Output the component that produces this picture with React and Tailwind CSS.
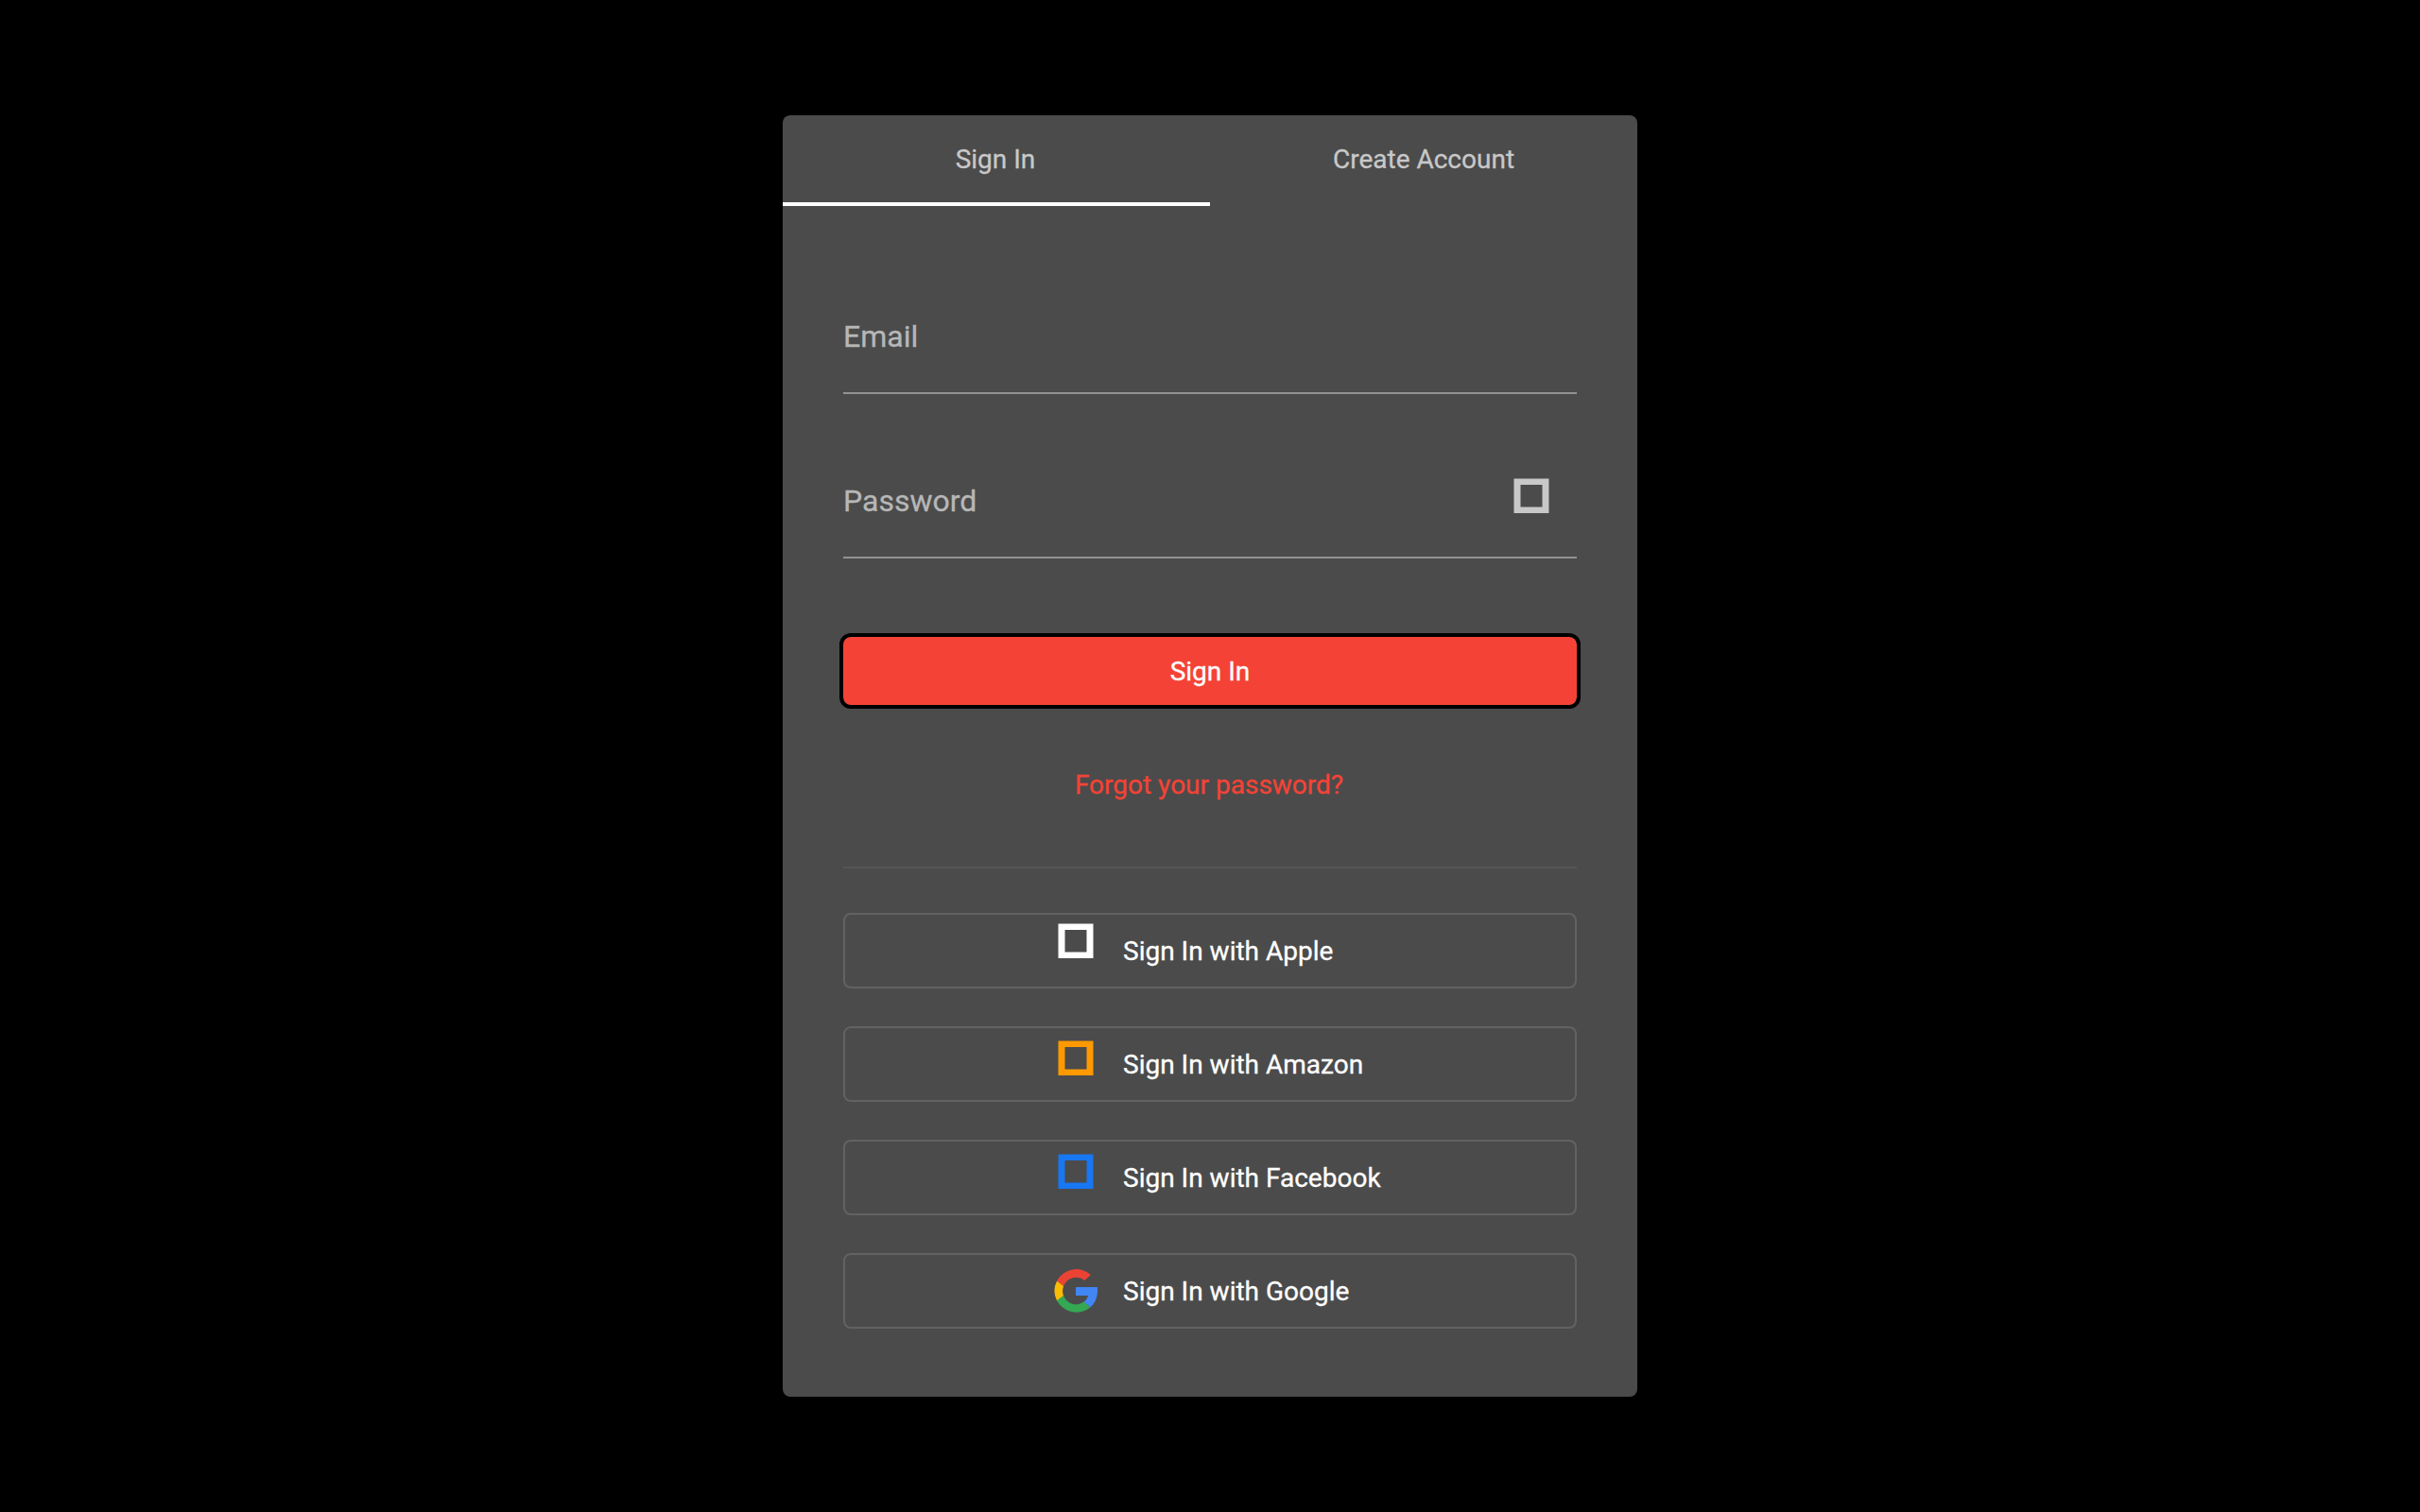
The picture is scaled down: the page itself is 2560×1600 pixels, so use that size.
function BoxIcon({ className }) {
  return (
    <svg viewBox="0 0 40 40" className={`block size-10 shrink-0 ${className}`} fill="currentColor">
      <path fillRule="evenodd" d="M1.5 1.5H38.5V38H1.5ZM8.5 8V31.5H31.5V8Z" />
    </svg>
  );
}

function GoogleIcon() {
  return (
    <svg viewBox="0 0 46 46" className="mr-[27px] block size-[46px] shrink-0">
      <path fill="#EA4335" d="M3.1 12.2A23 23 0 0 1 38.9 6.1L32.2 11.9A14 14 0 0 0 10.1 18.1Z" />
      <path fill="#FBBC05" d="M3.1 12.5A23 23 0 0 0 3.1 33.5L10.1 28.3A14 14 0 0 1 10.1 18.1Z" />
      <path fill="#34A853" d="M3.1 33.2A23 23 0 0 0 38.6 40.2L31.6 34.6A14 14 0 0 1 10.1 28.1Z" />
      <path fill="#4285F4" d="M23 19H46V23C46 30 43.3 36.3 38.6 40.2L31.6 34.8Q35 32 36.2 28H23Z" />
    </svg>
  );
}

const providers = [
  { label: "Apple", icon: <BoxIcon className="mr-[30px] mb-[21px] ml-[3px] text-white" /> },
  { label: "Amazon", icon: <BoxIcon className="mr-[30px] mb-[13px] ml-[3px] text-[#ff9900]" /> },
  { label: "Facebook", icon: <BoxIcon className="mr-[30px] mb-[13px] ml-[3px] text-[#1877f2]" /> },
  { label: "Google", icon: <GoogleIcon /> },
];

export default function App() {
  return (
    <div className="flex h-[1600px] w-[2560px] items-center justify-center bg-black font-['Roboto',sans-serif] text-[28px] leading-8 text-white [-webkit-text-stroke:0.3px]">
      <main className="h-[1356px] w-[904px] overflow-hidden rounded-lg bg-[#4b4b4b]">
        <nav className="grid h-24 grid-cols-2 text-[#c8c8c8]">
          <button className="border-b-4 border-white pt-0.5 pr-0.5">Sign In</button>
          <button className="border-b-4 border-transparent pt-0.5">Create Account</button>
        </nav>
        <form className="px-16">
          <div className="mt-[99px] flex h-[100px] items-start border-b-2 border-[#929292] pt-[19px] text-[32px] leading-10 text-[#b7b7b7]">
            Email
          </div>
          <div className="mt-[74px] flex h-[100px] items-start justify-between border-b-2 border-[#929292] pt-[19px] pr-7 text-[32px] leading-10 text-[#b7b7b7]">
            Password
            <BoxIcon className="-mt-[5px] text-[#c8c8c8]" />
          </div>
          <button className="mt-[83px] block h-[72px] w-full rounded-lg bg-[#f44336] pt-0.5 outline-4 outline-black">
            Sign In
          </button>
          <a className="mt-[69px] block pr-0.5 text-center text-[#f44336]">Forgot your password?</a>
        </form>
        <hr className="mx-16 mt-[70px] border-t-2 border-[#565656]" />
        <div className="mt-[47px] flex flex-col gap-10 px-16">
          {providers.map(({ label, icon }) => (
            <button
              key={label}
              className="flex h-20 items-center rounded-lg border-2 border-[#626262] pl-[221px]"
            >
              {icon}
              <span className="pt-0.5">Sign In with {label}</span>
            </button>
          ))}
        </div>
      </main>
    </div>
  );
}
